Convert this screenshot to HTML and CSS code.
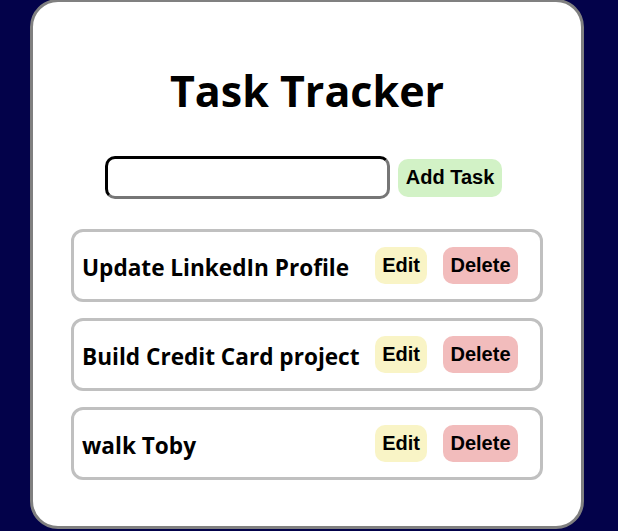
FILE: index.html
```html
<!DOCTYPE html>
<html lang="en">
<head>
<meta charset="utf-8">
<title>Task Tracker</title>
<link rel="stylesheet" href="styles.css">
</head>
<body>
<div class="card">
  <h1 class="title">Task Tracker</h1>
  <div class="add-row">
    <input class="task-input" type="text">
    <button class="btn btn-add">Add Task</button>
  </div>
  <ul class="task-list">
    <li class="task">
      <span class="task-name">Update LinkedIn Profile</span>
      <div class="actions">
        <button class="btn btn-edit">Edit</button>
        <button class="btn btn-delete">Delete</button>
      </div>
    </li>
    <li class="task">
      <span class="task-name">Build Credit Card project</span>
      <div class="actions">
        <button class="btn btn-edit">Edit</button>
        <button class="btn btn-delete">Delete</button>
      </div>
    </li>
    <li class="task">
      <span class="task-name">walk Toby</span>
      <div class="actions">
        <button class="btn btn-edit">Edit</button>
        <button class="btn btn-delete">Delete</button>
      </div>
    </li>
  </ul>
</div>
</body>
</html>
```

FILE: styles.css
```css
html, body {
  margin: 0;
  padding: 0;
  background: #03024a;
  height: 100%;
  overflow: hidden;
}

.card {
  box-sizing: border-box;
  width: 554px;
  height: 530px;
  margin: -1px 0 0 30px;
  background: #ffffff;
  border: 3px solid #808080;
  border-radius: 28px;
  display: flex;
  flex-direction: column;
  align-items: center;
  font-family: "Open Sans", "Noto Sans", sans-serif;
}

.title {
  margin: 59px 0 0 0;
  font-size: 43px;
  line-height: 60px;
  font-weight: 700;
  color: #000;
}

.add-row {
  display: flex;
  align-items: center;
  gap: 8px;
  margin-top: 35px;
  padding-right: 7px;
}

.task-input {
  box-sizing: border-box;
  width: 285px;
  height: 43px;
  border: 3px inset #767676;
  border-top-color: #222;
  border-left-color: #222;
  border-radius: 10px;
  background: #fff;
  outline: none;
  padding: 0 8px;
}

.btn {
  border: none;
  border-radius: 10px;
  font-family: "Liberation Sans", Arial, sans-serif;
  font-weight: 700;
  font-size: 20px;
  color: #000;
  padding: 0 8px;
  height: 37px;
  cursor: pointer;
}

.btn-add {
  background: #d2f2c6;
  height: 38px;
}

.btn-edit {
  background: #f9f4c6;
  padding: 0 7px;
}

.btn-delete {
  background: #f2bcbc;
  padding: 0 7.5px;
}

.task-list {
  list-style: none;
  margin: 30px 0 0 0;
  padding: 0;
  width: 472px;
  display: flex;
  flex-direction: column;
  gap: 16px;
}

.task {
  box-sizing: border-box;
  height: 73px;
  border: 3px solid #c0c0c0;
  border-radius: 12px;
  display: flex;
  align-items: center;
  padding: 0 22px 0 8px;
}

.task-name {
  flex: 1;
  font-size: 22.6px;
  font-weight: 700;
  color: #000;
  padding-top: 4px;
}

.actions {
  display: flex;
  gap: 16px;
}
```
